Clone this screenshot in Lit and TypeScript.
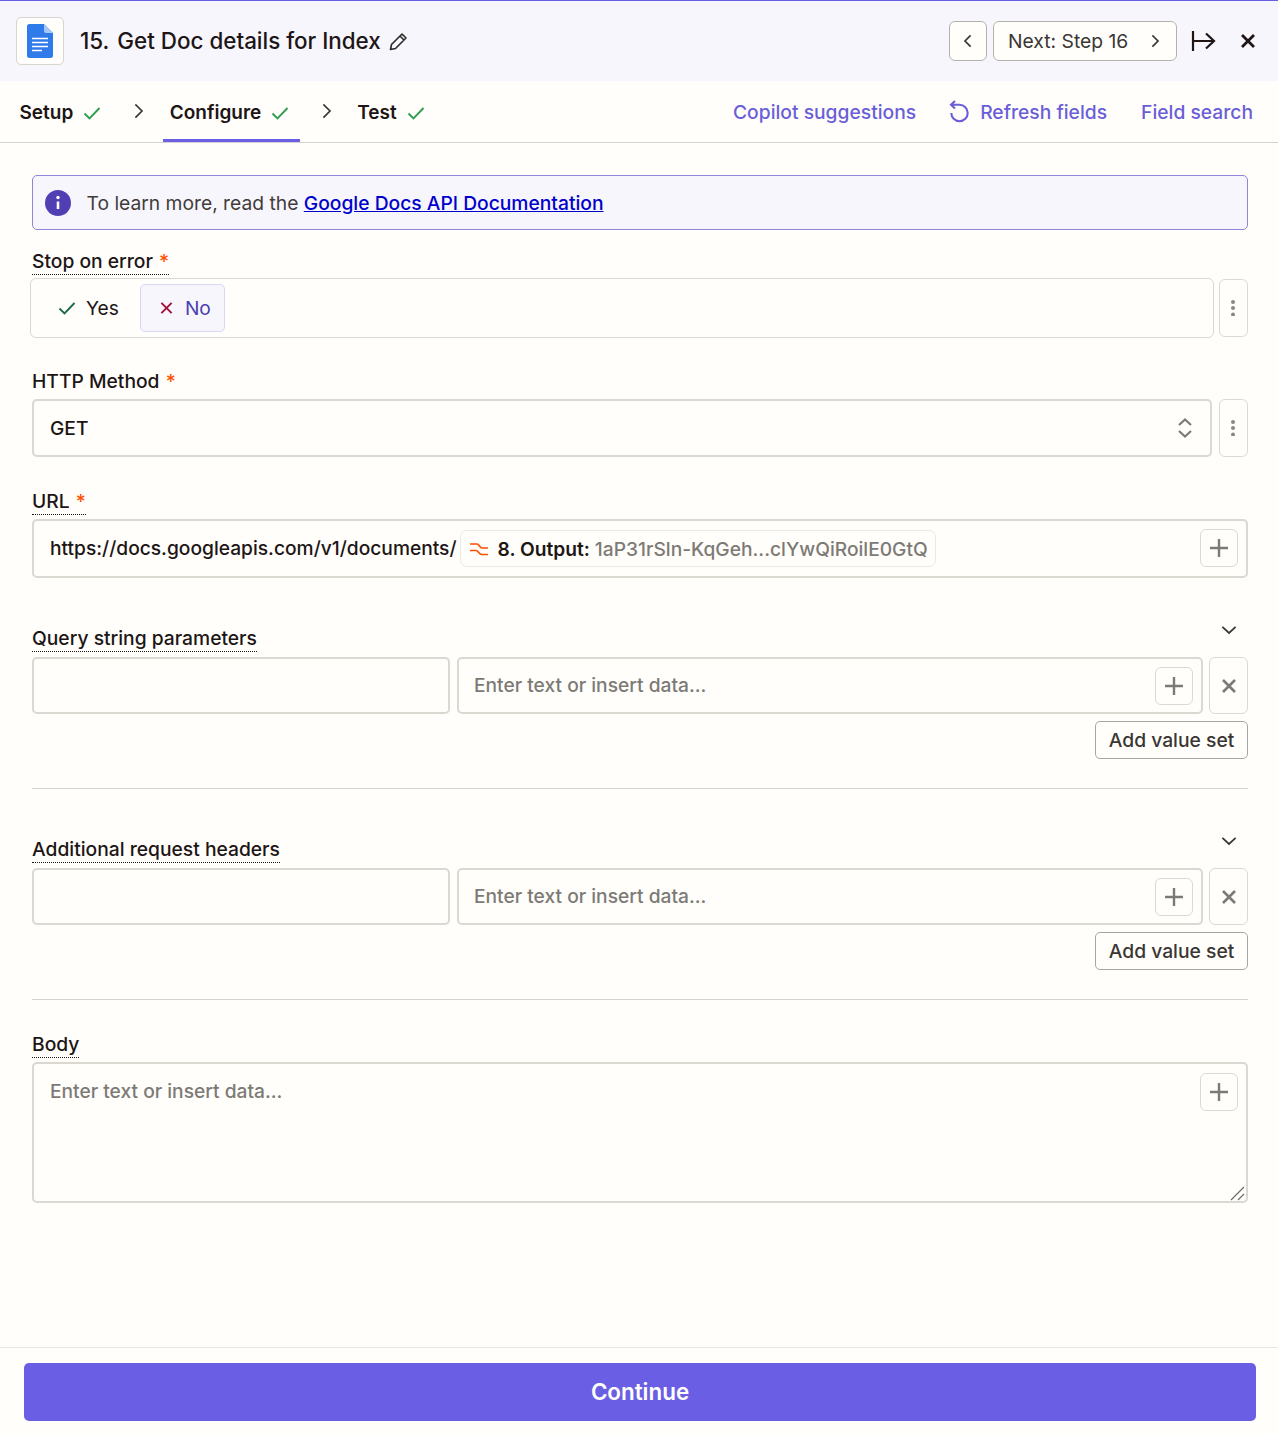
import { LitElement, html, css } from "lit";
import { customElement } from "lit/decorators.js";

const chev = (d: string) => html`<svg width="16" height="16" viewBox="0 0 16 16" fill="none" stroke="currentColor" stroke-width="1.7" stroke-linecap="square"><path d=${d}/></svg>`;
const check = (color: string, size = 18) => html`<svg width=${size} height=${size} viewBox="0 0 18 18" fill="none" stroke=${color} stroke-width="1.9"><path d="M1.5 9.5 L6.5 14.5 L16.5 4"/></svg>`;
const plus = html`<svg width="20" height="20" viewBox="0 0 20 20" fill="none" stroke="#7d7a76" stroke-width="2.4"><path d="M10 1V19M1 10H19"/></svg>`;
const cross = html`<svg width="16" height="16" viewBox="0 0 16 16" fill="none" stroke="#7d7a76" stroke-width="2.6"><path d="M2 2L14 14M14 2L2 14"/></svg>`;
const dots = html`<svg class="dots" width="4" height="16" viewBox="0 0 4 16" fill="#8a8784"><circle cx="2" cy="2" r="2"/><circle cx="2" cy="8" r="2"/><circle cx="2" cy="14.5" r="2"/></svg>`;

@customElement("app-root")
export class AppRoot extends LitElement {
  static styles = css`
    :host { display: block; width: 1278px; height: 1434px; background: #fffefb; font-family: Inter, "Noto Sans", sans-serif; color: #2d2926; overflow: hidden; }
    * { box-sizing: border-box; }
    .shell { height: 1434px; display: flex; flex-direction: column; }
    .top { height: 81px; flex: none; background: #f7f6fd; border-top: 1px solid #6a5ee4; display: flex; align-items: center; padding: 0 22px 0 16px; }
    .logo { width: 48px; height: 48px; border: 1px solid #d8d5cf; border-radius: 5px; background: #fffefb; display: flex; align-items: center; justify-content: center; margin-right: 16px; }
    .title { font-size: 22.4px; font-weight: 500; color: #201515; white-space: nowrap; padding-bottom: 2px; }
    .title span { margin-right: 8px; }
    .pencil { margin-left: 8px; display: block; }
    .spacer { flex: 1; }
    .nav { height: 40px; border: 1px solid #b5b2ad; border-radius: 6px; background: #fffefb; display: flex; align-items: center; color: #3a3633; font-size: 19.3px; }
    .prev { width: 38px; justify-content: center; margin-right: 6px; }
    .next { width: 184px; padding: 0 13px 0 14px; justify-content: space-between; }
    .exit { margin: 0 23px 0 14px; display: block; }
    .tabs { height: 62px; flex: none; display: flex; align-items: stretch; border-bottom: 1px solid #d6d3cd; padding: 0 25px 0 13px; }
    .tab { display: flex; align-items: center; gap: 10px; padding: 5px 6.5px 0; font-size: 19px; font-weight: 600; color: #201515; border-bottom: 3px solid transparent; height: 61px; line-height: 24px; }
    .tab.on { border-bottom-color: #6a5ee4; }
    .sep { display: flex; align-items: center; justify-content: center; color: #3a3633; padding: 0 0 2px 4px; }
    .sep.a { width: 55px; padding-left: 8px; }
    .sep.b { width: 51px; }
    .tab.cfg { width: 137px; padding-left: 7px; }
    .link { display: flex; align-items: center; font-size: 19.25px; font-weight: 500; color: #6a5ed8; gap: 10px; }
    .link.r { margin-left: 33px; }
    .link.f { margin-left: 34px; }
    .content { flex: 1; padding: 32px 30px 0 32px; }
    .alert { height: 55px; border: 1px solid #8f87dc; border-radius: 5px; background: #f7f6fd; display: flex; align-items: center; padding: 0 0 0 12px; gap: 15.5px; font-size: 19.25px; color: #413c39; }
    .alert a { color: #0000cc; font-weight: 500; text-decoration: underline; }
    .label { display: inline-block; font-size: 19.25px; font-weight: 500; color: #201515; line-height: 23px; height: 25px; border-bottom: 1.5px dotted #201515; }
    .label.plain { border: 0; }
    .star { color: #ff4f00; margin-left: 1px; }
    .lb1 { margin-top: 20px; }
    .lb2 { margin-top: 32px; }
    .lb3 { margin-top: 33px; }
    .lb4 { margin-top: 33px; }
    .field { border: 2px solid #dbd8d2; border-radius: 5px; background: #fffefb; font-size: 19.2px; font-weight: 500; color: #201515; display: flex; align-items: center; }
    .tx { margin-bottom: 2px; }
    .row { display: flex; margin-top: 4px; }
    .row.t { margin-top: 3px; }
    .mini { border: 1px solid #dcd9d3; border-radius: 6px; display: flex; align-items: center; justify-content: center; background: #fffefb; flex: none; }
    .menu { width: 29px; margin-left: 7px; padding-right: 1px; }
    .menu.t { height: 58px; margin: 1px 0 0 5px; }
    .toggle { width: 1184px; height: 60px; margin-left: -2px; border-width: 1px; padding-left: 6px; border-radius: 6px; font-weight: 400; }
    .opt { height: 48px; display: flex; align-items: center; gap: 10px; padding: 0 12px 0 20px; border: 1px solid transparent; border-radius: 5px; }
    .opt.sel { background: #f7f6fd; border-color: #d9d6f5; color: #4a3fb0; padding: 0 13px 0 19px; gap: 12px; width: 85px; margin-left: 8px; }
    .select { width: 1180px; height: 58px; padding: 0 17px 0 16px; justify-content: space-between; }
    .input { height: 59px; padding: 0 8px 0 16px; margin-top: 4px; width: 1216px; }
    .pill { display: flex; align-items: center; height: 37px; width: 476px; margin-left: 3px; border: 1px solid #ebe9e4; border-radius: 7px; padding-left: 9px; white-space: nowrap; }
    .pill b { font-weight: 600; margin-left: 10px; }
    .pill span { color: #7d7a76; margin-left: 5px; font-weight: 500; }
    .add { width: 38px; height: 38px; }
    .input .add { margin-bottom: 2px; }
    .push { margin-left: auto; }
    .head { display: flex; align-items: flex-end; justify-content: space-between; margin-top: 44px; }
    .head svg { margin: 0 11px 14px 0; color: #3a3633; }
    .pair { display: flex; height: 57px; margin-top: 5px; width: 1216px; }
    .key { width: 418px; height: 57px; margin-right: 7px; }
    .val { width: 746px; height: 57px; padding: 0 8px 0 15px; color: #7d7a76; justify-content: space-between; margin-right: 6px; }
    .del { width: 39px; }
    .addset { width: 153px; height: 38px; border: 1px solid #a8a5a0; border-radius: 5px; margin: 7px 0 0 1063px; display: flex; align-items: center; justify-content: center; font-size: 19.3px; font-weight: 500; color: #3a3633; background: #fffefb; }
    hr { border: 0; height: 1px; background: #d6d3cd; margin: 29px 0 0; width: 1216px; }
    .area { position: relative; height: 141px; margin-top: 4px; width: 1216px; display: block; color: #7d7a76; padding: 15px 16px; }
    .area .add { position: absolute; top: 9px; right: 8px; }
    .grip { position: absolute; right: 0; bottom: 0; display: block; }
    .foot { height: 87px; flex: none; border-top: 1px solid #e8e6e1; padding: 15px 22px 0 24px; }
    .cta { height: 58px; border-radius: 5px; background: #6a5ee4; color: #fffefb; display: flex; align-items: center; justify-content: center; font-size: 22.4px; font-weight: 600; padding-bottom: 2px; }
  `;

  private pair() {
    return html`<div class="pair">
      <div class="field key"></div>
      <div class="field val"><span class="tx">Enter text or insert data...</span><div class="mini add">${plus}</div></div>
      <div class="mini del">${cross}</div>
    </div>
    <div class="addset">Add value set</div>`;
  }

  private head(text: string) {
    return html`<div class="head"><span class="label">${text}</span>${chev("M2 5.5L8 11L14 5.5")}</div>`;
  }

  render() {
    const ok = check("#2e9e50");
    return html`<div class="shell">
      <div class="top">
        <div class="logo"><svg width="26" height="34" viewBox="0 0 26 34"><path d="M2.5 0H17L26 9V31.5A2.5 2.5 0 0 1 23.5 34H2.5A2.5 2.5 0 0 1 0 31.5V2.5A2.5 2.5 0 0 1 2.5 0Z" fill="#2f7bea"/><path d="M17 0L26 9H19A2 2 0 0 1 17 7Z" fill="#a6c8f7"/><path d="M5 14.5H21M5 18.5H21M5 22.5H21M5 26.5H15" stroke="#fff" stroke-width="1.4"/></svg></div>
        <div class="title"><span>15.</span>Get Doc details for Index</div>
        <svg class="pencil" width="19" height="19" viewBox="0 0 19 19" fill="none" stroke="#2d2926" stroke-width="1.6" stroke-linejoin="round"><path d="M1.5 17.5L2.5 12.5L13 2L17 6L6.5 16.5Z M11 4L15 8"/></svg>
        <div class="spacer"></div>
        <div class="nav prev">${chev("M10 3L5 8L10 13")}</div>
        <div class="nav next"><span>Next: Step 16</span>${chev("M6 3L11 8L6 13")}</div>
        <svg class="exit" width="26" height="24" viewBox="0 0 26 24" fill="none" stroke="#201515" stroke-width="2.2"><path d="M2 2V22M2 12H23M15 4.5L23 12L15 19.5"/></svg>
        <svg width="16" height="16" viewBox="0 0 16 16" fill="none" stroke="#201515" stroke-width="2.8"><path d="M2 2L14 14M14 2L2 14"/></svg>
      </div>
      <div class="tabs">
        <div class="tab">Setup ${ok}</div>
        <div class="sep a">${chev("M5 2L11 8L5 14")}</div>
        <div class="tab on cfg">Configure ${ok}</div>
        <div class="sep b">${chev("M5 2L11 8L5 14")}</div>
        <div class="tab">Test ${ok}</div>
        <div class="spacer"></div>
        <div class="link">Copilot suggestions</div>
        <div class="link r"><svg width="21" height="24" viewBox="0 0 21 24" fill="none" stroke="#6a5ed8" stroke-width="2.1"><path d="M2 4.8H10.5A8.2 8.2 0 1 1 2.3 13M6 1L2 4.8L6 8.6"/></svg>Refresh fields</div>
        <div class="link f">Field search</div>
      </div>
      <div class="content">
        <div class="alert">
          <svg width="26" height="26" viewBox="0 0 26 26"><circle cx="13" cy="13" r="13" fill="#4f3fb3"/><path d="M13 11.5V19" stroke="#fff" stroke-width="2.6"/><circle cx="13" cy="7.5" r="1.7" fill="#fff"/></svg>
          <span>To learn more, read the <a>Google Docs API Documentation</a></span>
        </div>
        <div class="lb1"><span class="label">Stop on error <span class="star">*</span></span></div>
        <div class="row t">
          <div class="field toggle">
            <div class="opt">${check("#1e6b47")}Yes</div>
            <div class="opt sel"><svg width="14" height="14" viewBox="0 0 14 14" fill="none" stroke="#a3123a" stroke-width="2.1"><path d="M1.5 1.5L12.5 12.5M12.5 1.5L1.5 12.5"/></svg>No</div>
          </div>
          <div class="mini menu t">${dots}</div>
        </div>
        <div class="lb2"><span class="label plain">HTTP Method <span class="star">*</span></span></div>
        <div class="row">
          <div class="field select">GET<svg width="16" height="22" viewBox="0 0 16 22" fill="none" stroke="#7d7a76" stroke-width="2.2"><path d="M2 8L8 2.5L14 8M2 14L8 19.5L14 14"/></svg></div>
          <div class="mini menu">${dots}</div>
        </div>
        <div class="lb3"><span class="label">URL <span class="star">*</span></span></div>
        <div class="field input">
          <span class="tx">https://docs.googleapis.com/v1/documents/</span>
          <div class="pill"><svg width="18" height="14" viewBox="0 0 18 14" fill="none" stroke="#ff4f00" stroke-width="1.6"><path d="M0 2H7C9.5 2 9.5 6 12 6H18M0 8.5H6C8.5 8.5 9 12.5 11.5 12.5H18"/></svg><b>8. Output:</b><span>1aP31rSln-KqGeh...clYwQiRoilE0GtQ</span></div>
          <div class="mini add push">${plus}</div>
        </div>
        ${this.head("Query string parameters")}
        ${this.pair()}
        <hr />
        ${this.head("Additional request headers")}
        ${this.pair()}
        <hr />
        <div class="lb4"><span class="label">Body</span></div>
        <div class="field area">Enter text or insert data...
          <div class="mini add">${plus}</div>
          <svg class="grip" width="16" height="16" viewBox="0 0 16 16" fill="none" stroke="#6e6b68" stroke-width="1.2"><path d="M1 15L14 2M8 15L14 9"/></svg>
        </div>
      </div>
      <div class="foot"><div class="cta">Continue</div></div>
    </div>`;
  }
}
